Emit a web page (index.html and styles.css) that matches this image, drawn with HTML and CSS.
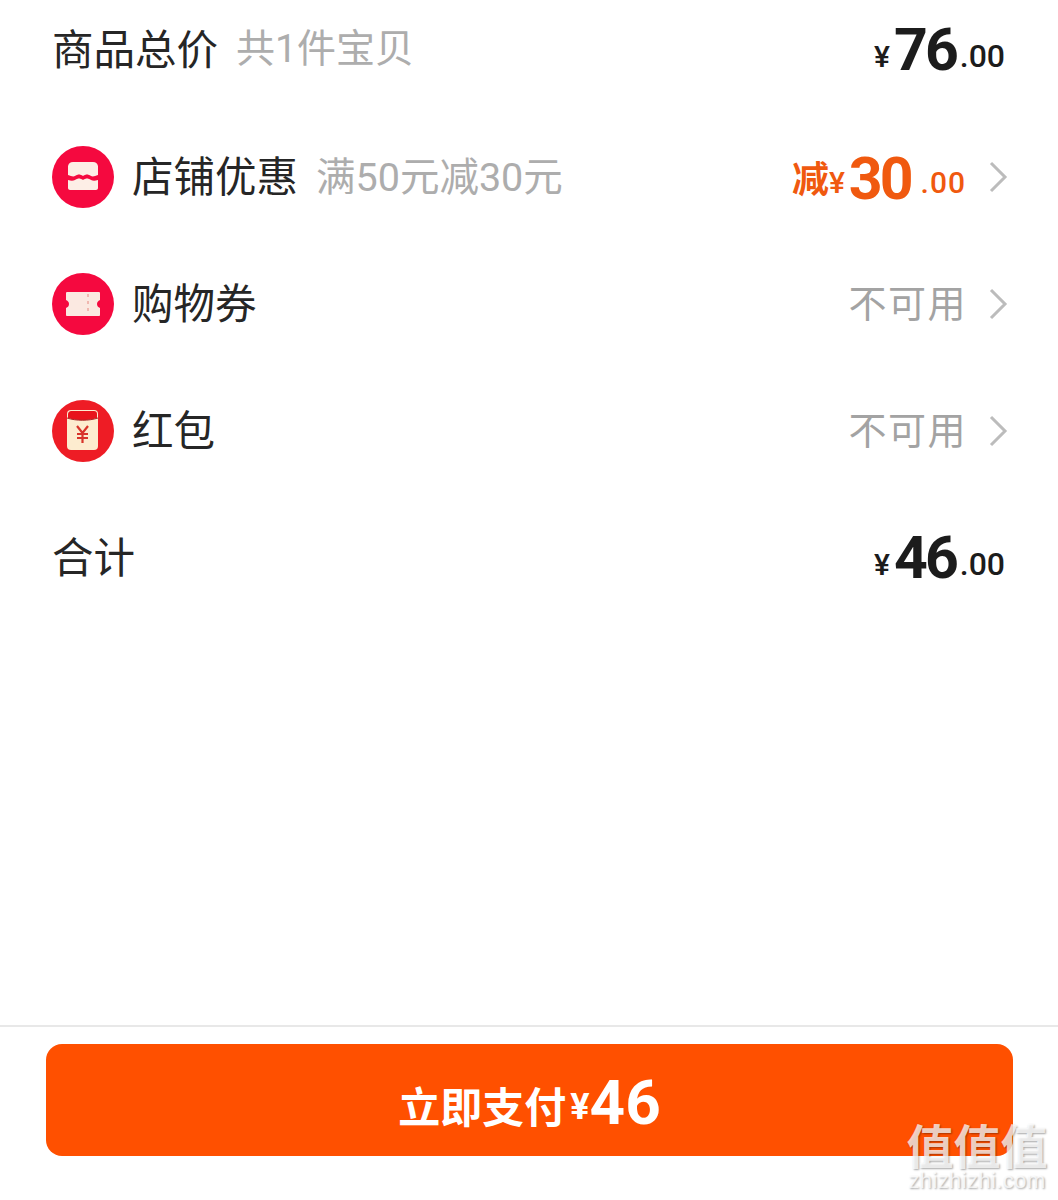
FILE: index.html
```html
<!DOCTYPE html>
<html>
<head>
<meta name="viewport" content="width=device-width, initial-scale=1">
<link rel="stylesheet" href="styles.css">
</head>
<body>
<div class="page">
  <div class="list">
    <div class="row">
      <div class="label">商品总价<span class="note first">共1件宝贝</span></div>
      <div class="price"><span class="yen">¥</span><span class="big">76</span><span class="cents">.00</span></div>
    </div>
    <div class="row">
      <svg class="icon" viewBox="0 0 62 62">
        <circle cx="31" cy="31" r="31" fill="#f5093f"/>
        <path d="M21 16h20c3 0 4 1 5 4v9c-3 1-5 2-7 1-3-2-5-2-8 0-3-2-5-2-8 0-2 1-4 0-7-1v-9c1-3 2-4 5-4z" fill="#fdeee6"/>
        <path d="M16 34c3 1 5 1 7 0 3-2 5-2 8 0 3-2 5-2 8 0 2 1 4 1 7 0v8c0 1-1 2-2 2H18c-1 0-2-1-2-2z" fill="#fdeee6"/>
      </svg>
      <div class="label">店铺优惠<span class="note">满50元减30元</span></div>
      <div class="price orange"><span class="minus">减</span><span class="yen">¥</span><span class="big">30</span><span class="cents">.00</span></div>
      <svg class="arrow" viewBox="0 0 20 32"><path d="M3 2l14 14L3 30" /></svg>
    </div>
    <div class="row">
      <svg class="icon" viewBox="0 0 62 62">
        <circle cx="31" cy="31" r="31" fill="#f5093f"/>
        <path d="M15 19h32c1 0 1 1 1 1v7c-2 1-3 2-3 4s1 3 3 4v7c0 1-1 1-1 1H15s-1 0-1-1v-7c2-1 3-2 3-4s-1-3-3-4v-7s0-1 1-1z" fill="#fbe9e1"/>
        <path d="M36 21v20" stroke="#f0b8b0" stroke-width="2" stroke-dasharray="3 4"/>
      </svg>
      <div class="label">购物券</div>
      <div class="na">不可用</div>
      <svg class="arrow" viewBox="0 0 20 32"><path d="M3 2l14 14L3 30" /></svg>
    </div>
    <div class="row">
      <svg class="icon" viewBox="0 0 62 62">
        <circle cx="31" cy="31" r="31" fill="#ee1c25"/>
        <rect x="15" y="10" width="31" height="40" rx="4" fill="#fdeccf"/>
        <path d="M16 14c0-2 2-3 3-3h23c2 0 3 1 3 3v4c-9 3-20 3-29 0z" fill="#e8141c"/>
        <path d="M15 18c9 3 22 3 31 0" fill="none" stroke="#a82a2a" stroke-width="1"/>
        <path d="M25 26l5.500 7 5.500-7M30.500 33v10M25 34h11M25 38h11" fill="none" stroke="#d8342a" stroke-width="2.200"/>
      </svg>
      <div class="label">红包</div>
      <div class="na">不可用</div>
      <svg class="arrow" viewBox="0 0 20 32"><path d="M3 2l14 14L3 30" /></svg>
    </div>
    <div class="row">
      <div class="label">合计</div>
      <div class="price"><span class="yen">¥</span><span class="big">46</span><span class="cents">.00</span></div>
    </div>
  </div>
  <div class="footer">
    <div class="paybtn">立即支付<span class="payyen">¥</span><span class="paynum">46</span></div>
  </div>
</div>
<div class="mark">
  <div class="markzh">值值值</div>
  <div class="marken">zhizhizhi.com</div>
</div>
</body>
</html>
```

FILE: styles.css
```css
* {
  box-sizing: border-box;
}
body {
  margin: 0;
  background-color: #fff;
  color: #262626;
  font-family: "Noto Sans CJK SC", "Liberation Sans", sans-serif;
}
.page {
  height: 1200px;
  display: flex;
  flex-direction: column;
  overflow: hidden;
}
/* rows */
.list {
  display: flex;
  flex-direction: column;
  gap: 27px;
  padding: 0 50px 0 52px;
}
.row {
  height: 100px;
  display: flex;
  align-items: center;
}
.label {
  font-size: 41.500px;
  line-height: 50px;
  padding-bottom: 6px;
  display: flex;
  align-items: center;
}
.note {
  margin-left: 18px;
  margin-top: 8px;
  font-family: "Roboto", "Noto Sans CJK SC", sans-serif;
  font-size: 39.500px;
  color: #adadad;
}
.note.first {
  margin-top: 4px;
  font-size: 39px;
}
.icon {
  width: 62px;
  height: 62px;
  margin-right: 18px;
  flex: none;
}
.price {
  margin-left: auto;
  margin-right: 3px;
  white-space: nowrap;
  font-family: "Roboto", "Noto Sans CJK SC", sans-serif;
  font-weight: 700;
  color: #1c1c1c;
}
.yen {
  font-size: 30px;
  font-weight: 500;
  vertical-align: 3px;
}
.big {
  font-size: 59px;
  line-height: 60px;
  letter-spacing: -3px;
  margin-left: 4px;
}
.cents {
  font-size: 32px;
  font-weight: 500;
  margin-left: 4px;
  vertical-align: 3px;
}
.orange {
  color: #f0590f;
  margin-right: 22px;
  margin-top: 3px;
}
.orange .yen {
  vertical-align: 6px;
}
.orange .cents {
  font-size: 30px;
  letter-spacing: 1px;
  margin-left: 10px;
  vertical-align: 6px;
}
.minus {
  font-family: "Noto Sans CJK SC", sans-serif;
  font-size: 37px;
  font-weight: 700;
  vertical-align: 6px;
}
.na {
  margin-left: auto;
  margin-right: 21px;
  padding-bottom: 8px;
  font-size: 38px;
  letter-spacing: 1.500px;
  color: #a3a3a3;
}
.arrow {
  width: 20px;
  height: 32px;
  flex: none;
  fill: none;
  stroke: #bcbcbc;
  stroke-width: 3;
}
/* bottom button */
.footer {
  margin-top: auto;
  height: 175px;
  border-top: 2px solid #e8e8e8;
  padding: 17px 45px 0 46px;
}
.paybtn {
  height: 112px;
  border-radius: 16px;
  background: #ff5000;
  color: #fff;
  font-size: 42px;
  font-weight: 700;
  padding-top: 8px;
  display: flex;
  align-items: center;
  justify-content: center;
}
.payyen {
  font-family: "Roboto", sans-serif;
  font-size: 36px;
  margin-left: 4px;
  margin-top: 6px;
}
.paynum {
  font-family: "Roboto", sans-serif;
  font-weight: 700;
  font-size: 62px;
  margin-top: -4px;
}
/* site watermark over the button corner */
.mark {
  position: absolute;
  left: 904px;
  top: 1118px;
  width: 146px;
  text-align: center;
  color: rgba(255, 255, 255, 0.75);
  text-shadow: 1px 1px 2px rgba(0, 0, 0, 0.35);
}
.markzh {
  font-size: 47px;
  line-height: 52px;
  font-weight: 700;
}
.marken {
  font-family: "Liberation Sans", sans-serif;
  font-size: 22px;
  line-height: 22px;
  letter-spacing: 0.400px;
}
```
